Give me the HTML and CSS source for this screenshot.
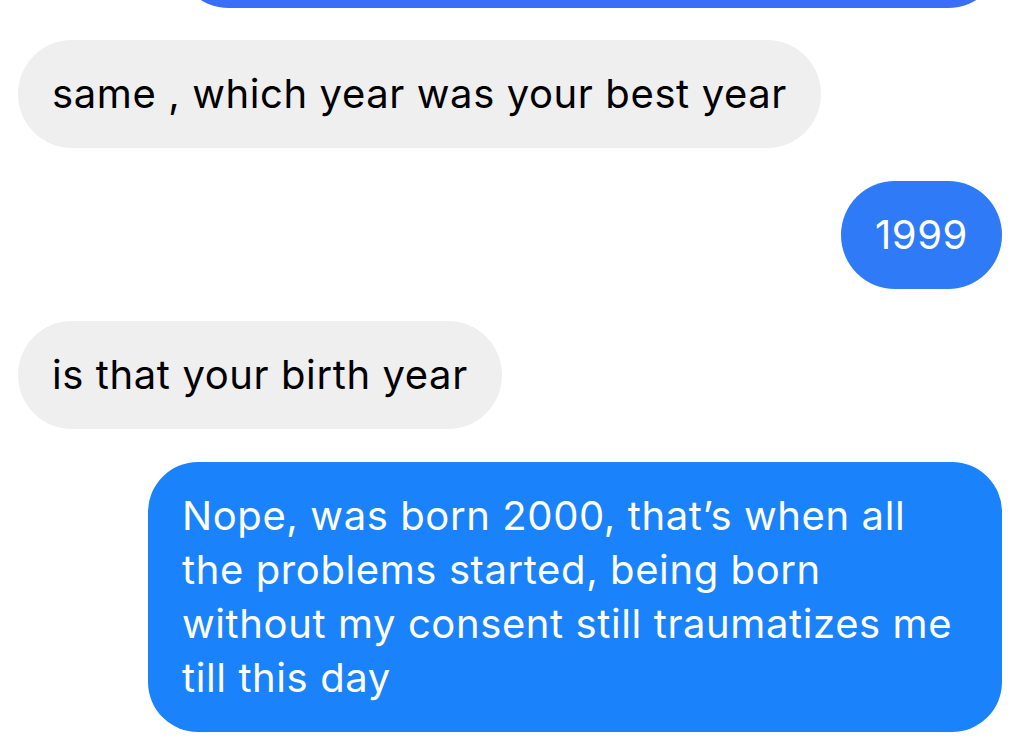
FILE: index.html
```html
<!DOCTYPE html>
<html lang="en">
<head>
    <meta charset="UTF-8">
    <meta name="viewport" content="width=device-width, initial-scale=1.0">
    <title>Chat</title>
    <link rel="stylesheet" href="styles.css">
</head>
<body>
    <div class="chat">
        <div class="bubble sent sent-top"></div>
        <div class="bubble received">same , which year was your best year</div>
        <div class="bubble sent sent-mid">1999</div>
        <div class="bubble received">is that your birth year</div>
        <div class="bubble sent sent-last long">Nope, was born 2000, that’s when all<br>the problems started, being born<br>without my consent still traumatizes me<br>till this day</div>
    </div>
</body>
</html>
```

FILE: styles.css
```css
body {
    margin: 0;
    background: #ffffff;
    font-family: Inter, "Noto Sans", sans-serif;
    overflow: hidden;
}
.chat {
    display: flex;
    flex-direction: column;
    gap: 32px;
    padding: 0 22px 0 18px;
}
.bubble {
    padding: 27px 34px;
    font-size: 40px;
    letter-spacing: 0.6px;
    line-height: 54px;
    border-radius: 54px;
    max-width: 786px;
    white-space: nowrap;
}
.received {
    align-self: flex-start;
    background: #efefef;
    color: #000000;
}
.sent {
    align-self: flex-end;
    color: #ffffff;
}
.sent-top {
    width: 759px;
    height: 54px;
    margin-top: -100px;
    background: #3a6df8;
}
.sent-mid {
    margin-top: 1px;
    background: #2f7af6;
}
.sent-last {
    margin-top: 1px;
    background: #1a83fb;
}
.long {
    width: 786px;
    border-radius: 50px;
}
```
